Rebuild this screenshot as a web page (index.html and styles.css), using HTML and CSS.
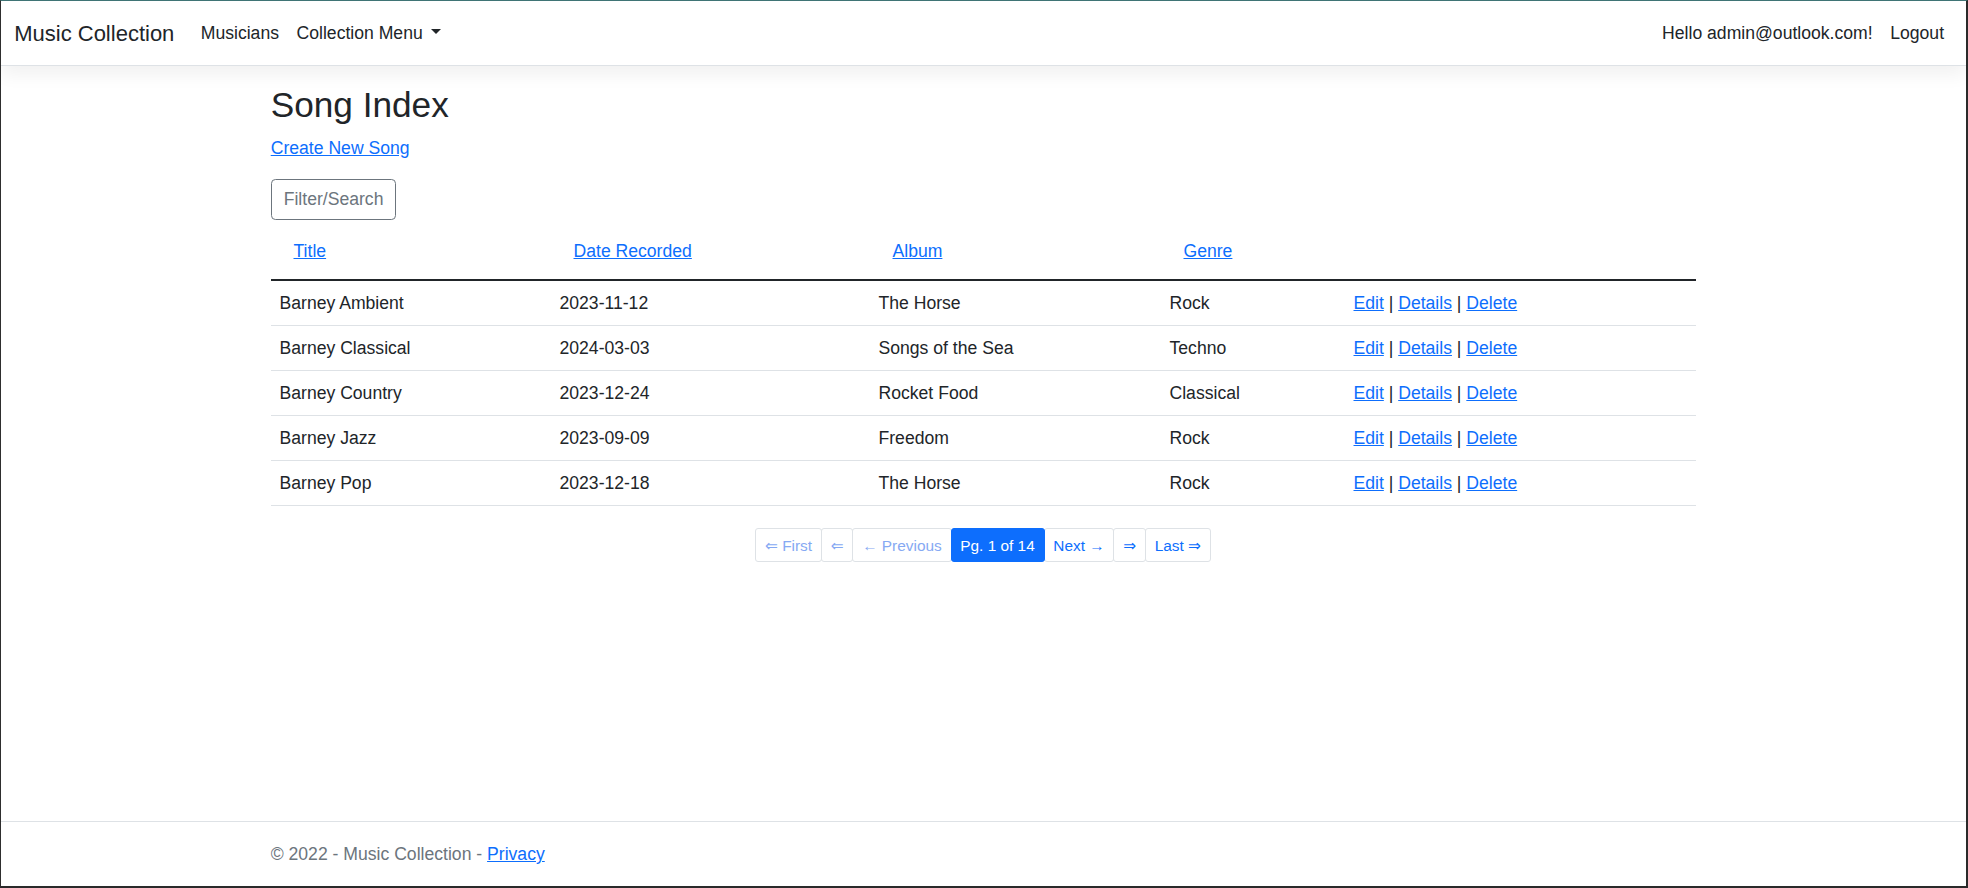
FILE: index.html
```html
<!DOCTYPE html>
<html lang="en">
<head>
<meta charset="utf-8">
<title>Song Index - Music Collection</title>
<link rel="stylesheet" href="styles.css">
</head>
<body>
<div class="frame">
  <header class="navbar">
    <div class="nav-left">
      <a class="brand" href="#">Music Collection</a>
      <a class="nav-link" href="#">Musicians</a>
      <a class="nav-link dropdown-toggle" href="#">Collection Menu</a>
    </div>
    <div class="nav-right">
      <a class="nav-link" href="#">Hello admin@outlook.com!</a>
      <a class="nav-link" href="#">Logout</a>
    </div>
  </header>

  <main class="container">
    <h1 class="title">Song Index</h1>
    <p class="create"><a href="#">Create New Song</a></p>
    <div class="filter-row">
      <button class="btn-outline" type="button">Filter/Search</button>
    </div>
    <table class="table">
      <colgroup>
        <col class="c1"><col class="c2"><col class="c3"><col class="c4"><col class="c5">
      </colgroup>
      <thead>
        <tr>
          <th><a class="sort" href="#">Title</a></th>
          <th><a class="sort" href="#">Date Recorded</a></th>
          <th><a class="sort" href="#">Album</a></th>
          <th><a class="sort" href="#">Genre</a></th>
          <th></th>
        </tr>
      </thead>
      <tbody>
        <tr><td>Barney Ambient</td><td>2023-11-12</td><td>The Horse</td><td>Rock</td><td><a href="#">Edit</a> | <a href="#">Details</a> | <a href="#">Delete</a></td></tr>
        <tr><td>Barney Classical</td><td>2024-03-03</td><td>Songs of the Sea</td><td>Techno</td><td><a href="#">Edit</a> | <a href="#">Details</a> | <a href="#">Delete</a></td></tr>
        <tr><td>Barney Country</td><td>2023-12-24</td><td>Rocket Food</td><td>Classical</td><td><a href="#">Edit</a> | <a href="#">Details</a> | <a href="#">Delete</a></td></tr>
        <tr><td>Barney Jazz</td><td>2023-09-09</td><td>Freedom</td><td>Rock</td><td><a href="#">Edit</a> | <a href="#">Details</a> | <a href="#">Delete</a></td></tr>
        <tr><td>Barney Pop</td><td>2023-12-18</td><td>The Horse</td><td>Rock</td><td><a href="#">Edit</a> | <a href="#">Details</a> | <a href="#">Delete</a></td></tr>
      </tbody>
    </table>

    <nav class="pager">
      <ul class="pagination">
        <li class="page-item disabled"><span class="page-link">&lArr; First</span></li>
        <li class="page-item disabled"><span class="page-link">&lArr;</span></li>
        <li class="page-item disabled"><span class="page-link">&larr; Previous</span></li>
        <li class="page-item active"><span class="page-link">Pg. 1 of 14</span></li>
        <li class="page-item"><a class="page-link" href="#">Next &rarr;</a></li>
        <li class="page-item"><a class="page-link" href="#">&rArr;</a></li>
        <li class="page-item"><a class="page-link" href="#">Last &rArr;</a></li>
      </ul>
    </nav>
  </main>

  <footer class="footer">
    <div class="container footer-inner">&copy; 2022 - Music Collection - <a href="#">Privacy</a></div>
  </footer>
</div>
</body>
</html>
```
FILE: styles.css
```css
* { box-sizing: border-box; }

html, body {
  margin: 0;
  padding: 0;
  height: 100%;
}

body {
  font-family: "Liberation Sans", Arial, "DejaVu Sans", sans-serif;
  font-size: 17.6px;
  line-height: 1.5;
  color: #212529;
  background: #ffffff;
}

a { color: #0d6efd; }

.frame {
  height: 100vh;
  display: flex;
  flex-direction: column;
  border-top: 1px solid #3f7475;
  border-left: 1px solid #2e2e2e;
  border-right: 2px solid #2a2a2a;
  border-bottom: 2px solid #2a2a2a;
  overflow: hidden;
}

/* Navbar */
.navbar {
  display: flex;
  justify-content: space-between;
  align-items: center;
  padding: 10px 13.2px;
  background: #fff;
  border-bottom: 1px solid #dee2e6;
  box-shadow: 0 8.8px 17.6px rgba(0, 0, 0, 0.06);
  margin-bottom: 17.6px;
  position: relative;
  z-index: 1;
}

.nav-left, .nav-right {
  display: flex;
  align-items: center;
}

.brand {
  font-size: 22px;
  line-height: 33px;
  padding: 5.5px 0;
  margin-right: 17.6px;
  color: #212529;
  text-decoration: none;
}

.nav-link {
  padding: 8.8px;
  line-height: 26.4px;
  color: #212529;
  text-decoration: none;
}

.dropdown-toggle::after {
  content: "";
  display: inline-block;
  margin-left: 8px;
  vertical-align: 0.255em;
  border-top: 0.3em solid;
  border-right: 0.3em solid transparent;
  border-left: 0.3em solid transparent;
  border-bottom: 0;
}

/* Main */
.container {
  width: 1425.6px;
  margin: 0 auto;
}

main.container {
  flex: 1;
}

.title {
  font-size: 35.2px;
  font-weight: 500;
  line-height: 1.2;
  margin: 0 0 8.8px;
}

.create {
  margin: 0 0 17.6px;
}

.btn-outline {
  font-family: inherit;
  font-size: 17.6px;
  line-height: 26.4px;
  padding: 6.6px 12px;
  color: #6c757d;
  background: transparent;
  border: 1px solid #6c757d;
  border-radius: 4.4px;
}

.table {
  width: 100%;
  border-collapse: collapse;
  table-layout: fixed;
  margin-bottom: 22px;
}

.c1 { width: 280px; }
.c2 { width: 319px; }
.c3 { width: 291px; }
.c4 { width: 184px; }

.table th {
  font-weight: 400;
  text-align: left;
  padding: 8.8px;
  border-bottom: 2px solid #212529;
}

.sort {
  display: inline-block;
  padding: 8.8px 14px 6.3px;
}

.table td {
  padding: 8.8px;
  border-bottom: 1px solid #dee2e6;
  line-height: 26.4px;
}

/* Pagination */
.pager {
  display: flex;
  justify-content: center;
}

.pagination {
  display: flex;
  list-style: none;
  margin: 0;
  padding: 0;
}

.page-link {
  display: block;
  font-size: 15.4px;
  line-height: 23.1px;
  padding: 4.4px 8.8px;
  border: 1px solid #dee2e6;
  border-radius: 3px;
  margin-left: -1px;
  color: #0d6efd;
  text-decoration: none;
  background: #fff;
}

.page-item.disabled .page-link {
  color: #86a9f3;
}

.page-item.active .page-link {
  background: #0d6efd;
  border-color: #0d6efd;
  color: #fff;
  position: relative;
}

/* Footer */
.footer {
  border-top: 1px solid #dee2e6;
  color: #6c757d;
  line-height: 64px;
  white-space: nowrap;
}
```
